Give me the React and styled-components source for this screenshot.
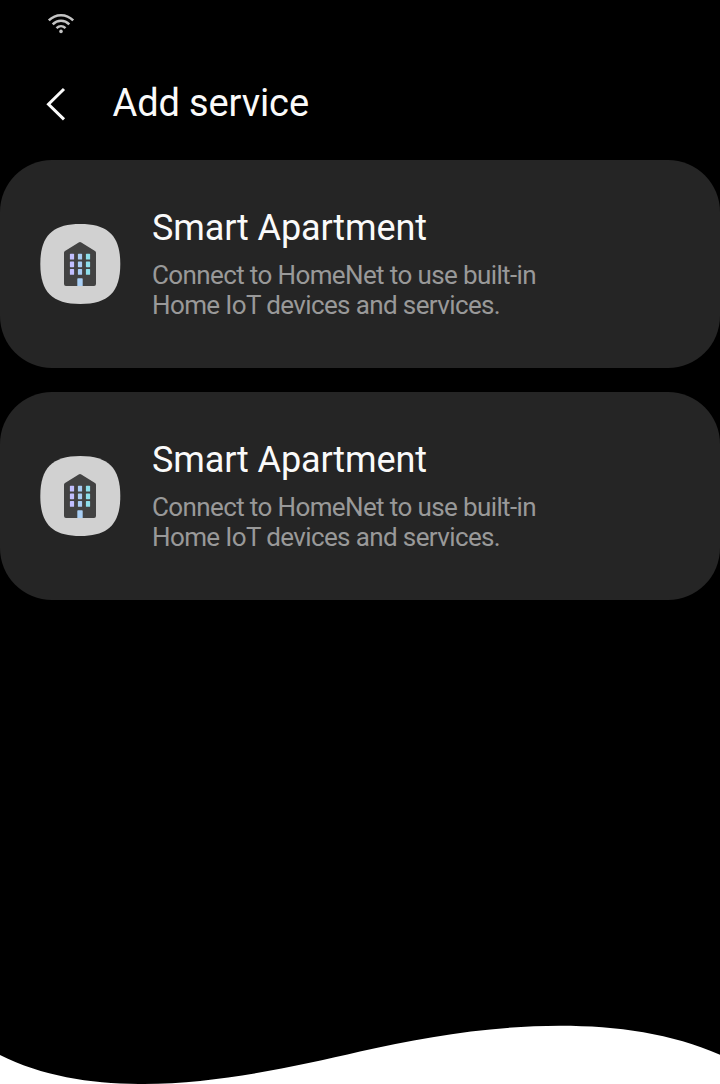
import React from "react";
import styled, { createGlobalStyle } from "styled-components";

const GlobalStyle = createGlobalStyle`
  * { box-sizing: border-box; }
  body { margin: 0; background: #000; font-family: Roboto, "Liberation Sans", sans-serif; }
`;

const Screen = styled.main`
  display: flex;
  flex-direction: column;
  width: 720px;
  height: 1084px;
  overflow: hidden;
  background: #000;
  color: #fafafa;
`;

const StatusBar = styled.div`
  display: flex;
  align-items: center;
  height: 48px;
  padding-left: 47px;
  svg { display: block; }
`;

const Header = styled.header`
  display: flex;
  align-items: center;
  height: 112px;
  padding-left: 44px;
`;

const BackButton = styled.button`
  display: flex;
  width: 24px;
  height: 36px;
  margin: 0;
  padding: 0;
  border: 0;
  background: none;
`;

const PageTitle = styled.h1`
  margin: 0 0 2px 44.5px;
  font-size: 38px;
  line-height: 44px;
  font-weight: 400;
  letter-spacing: -0.12px;
`;

const ServiceList = styled.div`
  display: flex;
  flex-direction: column;
  gap: 24px;
`;

const Card = styled.article`
  display: flex;
  align-items: center;
  gap: 32px;
  height: 208px;
  padding: 0 40px;
  border-radius: 52px;
  background: #252525;
`;

const ServiceText = styled.div`
  display: flex;
  flex-direction: column;
  gap: 11px;
  width: 420px;
  padding-bottom: 1px;
`;

const ServiceName = styled.h2`
  margin: 0;
  font-size: 36px;
  line-height: 42px;
  font-weight: 400;
  letter-spacing: -0.13px;
`;

const Description = styled.p`
  margin: 0;
  color: #999;
  font-size: 26px;
  line-height: 30px;
  letter-spacing: -0.62px;
`;

const Wave = styled.svg`
  display: block;
  width: 720px;
  height: 60px;
  margin-top: auto;
`;

const windowColumns = [
  { x: 29.9, color: "#c2bfff" },
  { x: 37.9, color: "#a9cdf5" },
  { x: 45.9, color: "#8edfeb" },
];

function WifiIcon() {
  return (
    <svg width="28" height="24" viewBox="0 0 28 24" fill="none" stroke="#c4c4c4" strokeWidth="2.5">
      <path d="M1.8 8.4C8.7 1.4 19.3 1.4 26.2 8.4" />
      <path d="M5.7 12.3C10.4 7.6 17.6 7.6 22.3 12.3" />
      <path d="M9.5 16.1C12.2 13.6 15.8 13.6 18.5 16.1" />
      <circle cx="14" cy="19.4" r="1.8" fill="#c4c4c4" stroke="none" />
    </svg>
  );
}

function ApartmentIcon() {
  return (
    <svg width="80" height="80" viewBox="0 0 80 80" overflow="visible">
      <path
        fill="#d1d1d1"
        d="M40.3 0C68.3 0 80.3 12 80.3 40S68.3 80 40.3 80 0.3 68 0.3 40 12.3 0 40.3 0Z"
      />
      <path
        fill="#424242"
        d="M38.7 18.5Q40 17.7 41.3 18.5L55 26.9Q56 27.5 56 28.7V60Q56 62 54 62H26Q24 62 24 60V28.7Q24 27.5 25 26.9Z"
      />
      {windowColumns.map(({ x, color }) =>
        [29.8, 37.5, 45.1].map((y) => (
          <rect key={`${x}-${y}`} x={x} y={y} width="4.2" height="5.7" rx="0.6" fill={color} />
        ))
      )}
      <path fill="#a9cff5" d="M37.3 62V55Q37.3 54.3 38 54.3H42Q42.7 54.3 42.7 55V62Z" />
    </svg>
  );
}

const services = [
  { id: 1, name: "Smart Apartment" },
  { id: 2, name: "Smart Apartment" },
];

export default function App() {
  return (
    <>
      <GlobalStyle />
      <Screen>
        <StatusBar>
          <WifiIcon />
        </StatusBar>
        <Header>
          <BackButton aria-label="Back">
            <svg width="24" height="36" viewBox="0 0 24 36" fill="none" stroke="#fafafa" strokeWidth="3">
              <path d="M20 3L4.5 18.2L20 33.4" />
            </svg>
          </BackButton>
          <PageTitle>Add service</PageTitle>
        </Header>
        <ServiceList>
          {services.map((service) => (
            <Card key={service.id}>
              <ApartmentIcon />
              <ServiceText>
                <ServiceName>{service.name}</ServiceName>
                <Description>
                  Connect to HomeNet to use built-in
                  <br />
                  Home IoT devices and services.
                </Description>
              </ServiceText>
            </Card>
          ))}
        </ServiceList>
        <Wave viewBox="0 0 720 60">
          <path fill="#fff" d="M0 31C106 84 250 53 360 27.5C470 2 614 -16 720 30.7V60H0Z" />
        </Wave>
      </Screen>
    </>
  );
}
